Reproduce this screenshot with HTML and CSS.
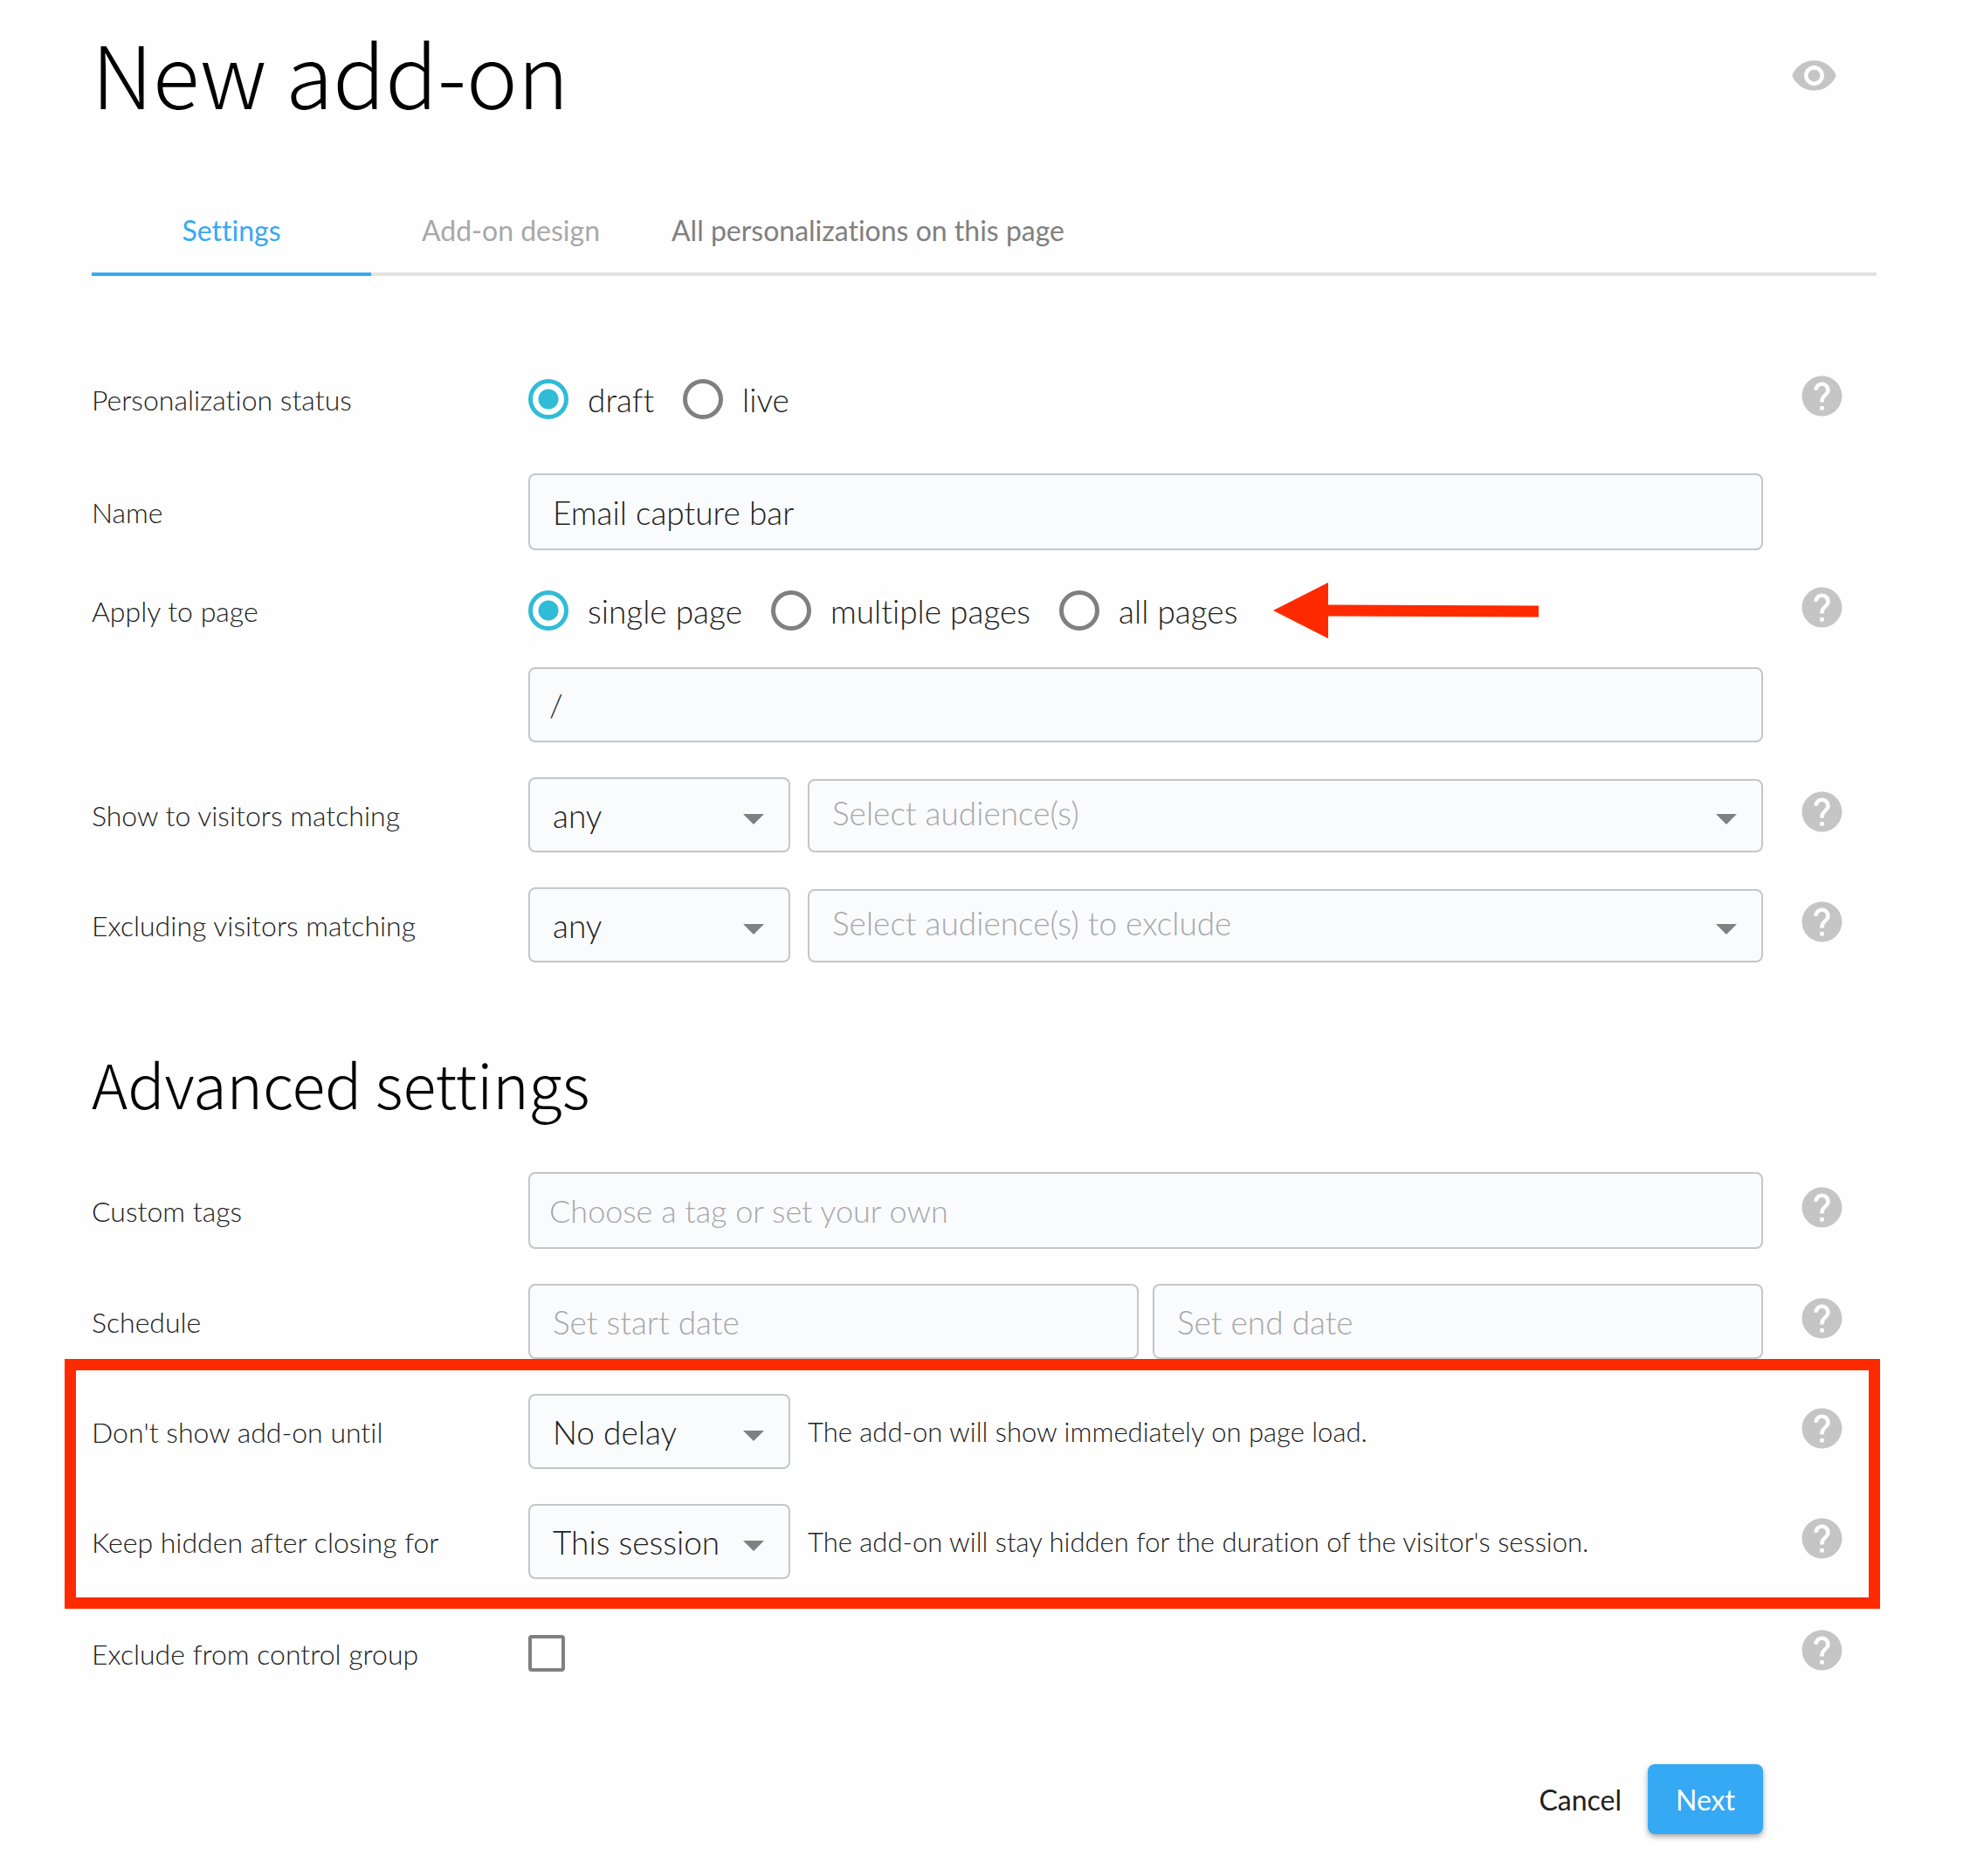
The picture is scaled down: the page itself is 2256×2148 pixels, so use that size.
FILE: index.html
```html
<!DOCTYPE html>
<html lang="en">
<head>
    <meta charset="UTF-8">
    <meta name="viewport" content="width=device-width, initial-scale=1.0">
    <title>New add-on</title>
    <link rel="stylesheet" href="styles.css">
</head>
<body>
    <svg class="sprite" aria-hidden="true">
        <symbol id="icon-help" viewBox="0 0 24 24">
            <path d="M12 2C6.48 2 2 6.48 2 12s4.48 10 10 10 10-4.48 10-10S17.52 2 12 2zm1 17h-2v-2h2v2zm2.07-7.75l-.9.92C13.45 12.9 13 13.5 13 15h-2v-.5c0-1.1.45-2.1 1.17-2.83l1.24-1.26c.37-.36.59-.86.59-1.41 0-1.1-.9-2-2-2s-2 .9-2 2H8c0-2.21 1.79-4 4-4s4 1.79 4 4c0 .88-.36 1.68-.93 2.25z"/>
        </symbol>
        <symbol id="icon-eye" viewBox="0 0 24 24">
            <path d="M12 4.5C7 4.5 2.73 7.61 1 12c1.73 4.39 6 7.5 11 7.5s9.27-3.11 11-7.5c-1.73-4.39-6-7.5-11-7.5zM12 17c-2.76 0-5-2.24-5-5s2.24-5 5-5 5 2.24 5 5-2.24 5-5 5zm0-8c-1.66 0-3 1.34-3 3s1.34 3 3 3 3-1.34 3-3-1.34-3-3-3z"/>
        </symbol>
    </svg>

    <div class="page">
        <header class="page-header">
            <h1>New add-on</h1>
            <button type="button" class="icon-btn" aria-label="Preview"><svg><use href="#icon-eye"/></svg></button>
        </header>

        <nav class="tabs">
            <a href="#settings" class="tab active">Settings</a>
            <a href="#design" class="tab disabled">Add-on design</a>
            <a href="#all" class="tab">All personalizations on this page</a>
        </nav>

        <form class="form">
            <div class="row row-tall">
                <span class="label" id="status-label">Personalization status</span>
                <div class="field radios" role="radiogroup" aria-labelledby="status-label">
                    <label class="radio"><input type="radio" name="status" checked>draft</label>
                    <label class="radio"><input type="radio" name="status">live</label>
                </div>
                <button type="button" class="icon-btn help" aria-label="Help"><svg><use href="#icon-help"/></svg></button>
            </div>

            <div class="row">
                <label class="label" for="name">Name</label>
                <div class="field">
                    <input type="text" class="input input-tall" id="name" value="Email capture bar">
                </div>
            </div>

            <div class="row row-radios">
                <span class="label" id="apply-label">Apply to page</span>
                <div class="field radios" role="radiogroup" aria-labelledby="apply-label">
                    <label class="radio"><input type="radio" name="apply" checked>single page</label>
                    <label class="radio"><input type="radio" name="apply">multiple pages</label>
                    <label class="radio"><input type="radio" name="apply">all pages</label>
                    <svg class="arrow" viewBox="0 0 304 64" aria-hidden="true">
                        <path d="M0 32L63 0v25.500L304 26.500v13L63 38.500V64z"/>
                    </svg>
                </div>
                <button type="button" class="icon-btn help" aria-label="Help"><svg><use href="#icon-help"/></svg></button>
            </div>

            <div class="row">
                <div class="field">
                    <input type="text" class="input input-tight" value="/" aria-label="Page path">
                </div>
            </div>

            <div class="row">
                <label class="label" for="show-mode">Show to visitors matching</label>
                <div class="field">
                    <div class="select"><select id="show-mode"><option>any</option><option>all</option></select></div>
                    <div class="select select-wide"><select aria-label="Audiences"><option>Select audience(s)</option></select></div>
                </div>
                <button type="button" class="icon-btn help" aria-label="Help"><svg><use href="#icon-help"/></svg></button>
            </div>

            <div class="row">
                <label class="label" for="exclude-mode">Excluding visitors matching</label>
                <div class="field">
                    <div class="select"><select id="exclude-mode"><option>any</option><option>all</option></select></div>
                    <div class="select select-wide"><select aria-label="Excluded audiences"><option>Select audience(s) to exclude</option></select></div>
                </div>
                <button type="button" class="icon-btn help" aria-label="Help"><svg><use href="#icon-help"/></svg></button>
            </div>

            <h2>Advanced settings</h2>

            <div class="row">
                <label class="label" for="tags">Custom tags</label>
                <div class="field">
                    <input type="text" class="input input-tall input-tight" id="tags" placeholder="Choose a tag or set your own">
                </div>
                <button type="button" class="icon-btn help" aria-label="Help"><svg><use href="#icon-help"/></svg></button>
            </div>

            <div class="row">
                <label class="label" for="start">Schedule</label>
                <div class="field field-dates">
                    <input type="text" class="input" id="start" placeholder="Set start date">
                    <input type="text" class="input" aria-label="End date" placeholder="Set end date">
                </div>
                <button type="button" class="icon-btn help" aria-label="Help"><svg><use href="#icon-help"/></svg></button>
            </div>

            <div class="highlight">
                <div class="row">
                    <label class="label" for="delay">Don't show add-on until</label>
                    <div class="field">
                        <div class="select"><select id="delay"><option>No delay</option></select></div>
                        <span class="hint">The add-on will show immediately on page load.</span>
                    </div>
                    <button type="button" class="icon-btn help" aria-label="Help"><svg><use href="#icon-help"/></svg></button>
                </div>

                <div class="row">
                    <label class="label" for="hidden-for">Keep hidden after closing for</label>
                    <div class="field">
                        <div class="select"><select id="hidden-for"><option>This session</option></select></div>
                        <span class="hint">The add-on will stay hidden for the duration of the visitor's session.</span>
                    </div>
                    <button type="button" class="icon-btn help" aria-label="Help"><svg><use href="#icon-help"/></svg></button>
                </div>
            </div>

            <div class="row row-tall">
                <label class="label" for="control">Exclude from control group</label>
                <div class="field">
                    <input type="checkbox" class="checkbox" id="control">
                </div>
                <button type="button" class="icon-btn help" aria-label="Help"><svg><use href="#icon-help"/></svg></button>
            </div>

            <div class="actions">
                <button type="button" class="btn">Cancel</button>
                <button type="submit" class="btn btn-primary">Next</button>
            </div>
        </form>
    </div>
</body>
</html>
```

FILE: styles.css
```css
* {
    box-sizing: border-box;
}

body {
    margin: 0;
    background-color: #fefefe;
    color: #212121;
    font-family: Lato, "Liberation Sans", sans-serif;
    font-size: 32px;
    font-weight: 300;
    font-variant-ligatures: none;
}

.sprite {
    display: none;
}

.page {
    padding: 24px 107px 48px 105px;
}

/* Header */
.page-header {
    display: flex;
    justify-content: space-between;
    align-items: center;
    height: 124px;
    padding-right: 44px;
}

h1,
h2 {
    margin: 0;
    color: #000;
    font-family: "Noto Sans CJK SC", "Noto Sans", sans-serif;
    font-weight: 300;
}

h1 {
    padding-bottom: 8px;
    font-size: 99px;
    line-height: 128px;
}

h2 {
    height: 160px;
    font-size: 70px;
    line-height: 196px;
}

.icon-btn {
    display: flex;
    padding: 0;
    border: 0;
    background: none;
    color: #c5c5c5;
}

.icon-btn svg {
    width: 55px;
    height: 55px;
    fill: currentColor;
}

/* Tabs */
.tabs {
    display: flex;
    margin-top: 64px;
    box-shadow: inset 0 -4px #e2e2e2;
}

.tab {
    min-width: 320px;
    height: 104px;
    padding: 0 24px;
    color: #808080;
    font-weight: 400;
    line-height: 104px;
    text-align: center;
    text-decoration: none;
}

.tab.disabled {
    color: #a8a8a8;
}

.tab.active {
    border-bottom: 4px solid #36a9f4;
    color: #36a9f4;
}

/* Form rows */
.form {
    display: flex;
    flex-direction: column;
    gap: 40px;
    margin-top: 96px;
}

.row {
    display: grid;
    grid-template-columns: 500px 1fr 130px;
    align-items: center;
}

.row-tall {
    height: 90px;
}

.row-radios {
    grid-template-rows: 50px;
    padding-top: 4px;
}

.field {
    display: flex;
    grid-column: 2;
    gap: 20px;
    align-items: flex-end;
}

.field-dates {
    gap: 16px;
}

.help {
    padding: 0 0 8px 40px;
}

.hint {
    align-self: center;
    font-size: 31px;
}

/* Text boxes and drop-downs */
.input,
.select select {
    width: 100%;
    height: 86px;
    padding: 0 26px;
    border: 2px solid #c5c6c8;
    border-radius: 8px;
    background-color: #fafbfd;
    color: #212121;
    font: inherit;
    font-size: 37px;
}

.input-tall {
    height: 88px;
}

.input-tight {
    padding: 0 22px;
    font-size: 36px;
}

.input::placeholder {
    color: #a8a8a8;
    opacity: 1;
}

.select {
    position: relative;
    flex: none;
    width: 300px;
}

.select select {
    display: block;
    appearance: none;
}

.select::after {
    content: "";
    position: absolute;
    top: 42px;
    right: 30px;
    border: 12px solid transparent;
    border-top-color: #808080;
    border-bottom: 0;
    pointer-events: none;
}

.select-wide {
    flex: 1;
    width: auto;
}

.select-wide select {
    height: 84px;
    padding-bottom: 8px;
    color: #a8a8a8;
}

.select-wide::after {
    top: 40px;
}

/* Radios and checkbox */
.radios {
    gap: 33px;
    align-items: center;
    height: 50px;
    font-size: 37px;
}

.radio {
    display: flex;
    align-items: center;
    gap: 22px;
    white-space: nowrap;
}

.radio input {
    appearance: none;
    width: 46px;
    height: 46px;
    margin: 0;
    border: 5px solid #808080;
    border-radius: 50%;
}

.radio input:checked {
    border-color: #30bcd6;
    background: radial-gradient(circle, #30bcd6 11px, transparent 12px);
}

.checkbox {
    appearance: none;
    width: 42px;
    height: 42px;
    margin: 0;
    border: 4px solid #808080;
    border-radius: 4px;
}

/* Red annotations */
.arrow {
    flex: none;
    width: 304px;
    height: 64px;
    margin-left: 8px;
    fill: #ff2a00;
}

.highlight {
    position: relative;
    display: flex;
    flex-direction: column;
    gap: 40px;
}

.highlight::after {
    content: "";
    position: absolute;
    inset: -40px -4px -34px -31px;
    border: 13px solid #ff2a00;
    pointer-events: none;
}

/* Buttons */
.actions {
    display: flex;
    justify-content: flex-end;
    margin: 42px 130px 0 0;
}

.btn {
    height: 80px;
    padding: 0 30px;
    border: 0;
    border-radius: 8px;
    background: none;
    color: #212121;
    font: inherit;
    font-weight: 400;
}

.btn-primary {
    min-width: 132px;
    background-color: #36a9f4;
    box-shadow: 0 3px 6px rgba(0, 0, 0, 0.35);
    color: #fff;
}
```
